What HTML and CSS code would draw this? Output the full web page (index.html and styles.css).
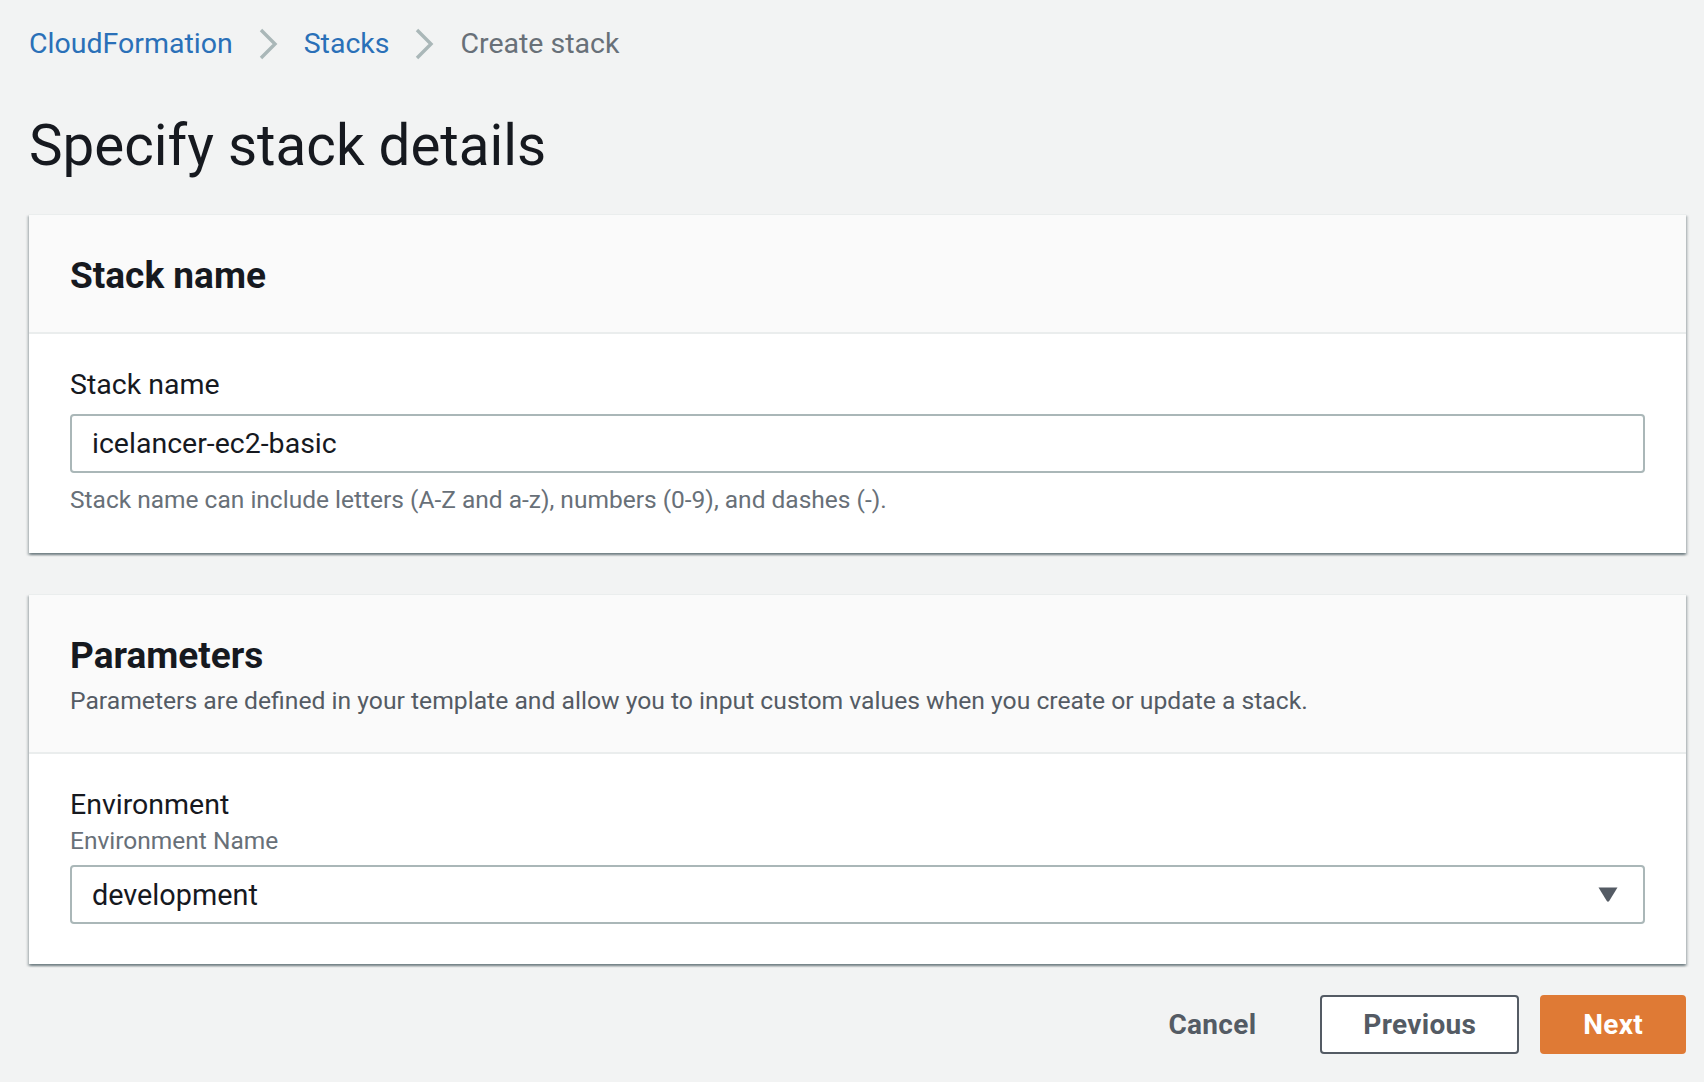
FILE: index.html
```html
<!DOCTYPE html>
<html lang="en">
<head>
<meta charset="utf-8">
<title>Specify stack details</title>
<link rel="stylesheet" href="styles.css">
</head>
<body>
<div class="page">
  <nav class="crumbs">
    <a class="crumb-link" href="#">CloudFormation</a>
    <svg class="chev" width="20" height="32" viewBox="0 0 20 32"><path d="M3 2 L17 16 L3 30" fill="none" stroke="#aab7b8" stroke-width="3.4"/></svg>
    <a class="crumb-link" href="#">Stacks</a>
    <svg class="chev" width="20" height="32" viewBox="0 0 20 32"><path d="M3 2 L17 16 L3 30" fill="none" stroke="#aab7b8" stroke-width="3.4"/></svg>
    <span class="crumb-current">Create stack</span>
  </nav>

  <h1 class="title">Specify stack details</h1>

  <section class="card">
    <header class="card-head">
      <h2 class="card-title">Stack name</h2>
    </header>
    <div class="card-body">
      <label class="field-label" for="sn">Stack name</label>
      <input class="text-input" id="sn" type="text" value="icelancer-ec2-basic">
      <p class="hint">Stack name can include letters (A-Z and a-z), numbers (0-9), and dashes (-).</p>
    </div>
  </section>

  <section class="card card-params">
    <header class="card-head">
      <h2 class="card-title">Parameters</h2>
      <p class="card-desc">Parameters are defined in your template and allow you to input custom values when you create or update a stack.</p>
    </header>
    <div class="card-body">
      <div class="field-label">Environment</div>
      <div class="field-desc">Environment Name</div>
      <div class="select">
        <span class="select-value">development</span>
        <svg class="caret" width="20" height="15" viewBox="0 0 20 15"><path d="M0.5 0.5 H19.5 L11.2 14 Q10 15.5 8.8 14 Z" fill="#545b64"/></svg>
      </div>
    </div>
  </section>

  <div class="actions">
    <button class="btn btn-link" type="button">Cancel</button>
    <button class="btn btn-normal" type="button">Previous</button>
    <button class="btn btn-primary" type="button">Next</button>
  </div>
</div>
</body>
</html>
```

FILE: styles.css
```css
* { box-sizing: border-box; }

html, body {
  margin: 0;
  padding: 0;
  background: #f2f3f3;
}

body {
  font-family: Roboto, "Liberation Sans", Arial, sans-serif;
  color: #16191f;
}

.page {
  padding: 24px 18px 0 29px;
}

.crumbs {
  display: flex;
  align-items: center;
  height: 40px;
  font-size: 28.5px;
  line-height: 40px;
}

.crumb-link {
  color: #2a70b8;
  text-decoration: none;
}

.chev {
  margin: 0 26px 0 25px;
  display: block;
}

.crumb-current {
  color: #687078;
}

.title {
  margin: 46px 0 0 0;
  font-size: 56.5px;
  font-weight: 400;
  line-height: 72px;
}

.card {
  margin-top: 32px;
  background: #ffffff;
  box-shadow: 0 2px 2px 0 rgba(0, 28, 36, 0.35), 2px 2px 2px 0 rgba(0, 28, 36, 0.15), -2px 2px 2px 0 rgba(0, 28, 36, 0.15);
  border-top: 1px solid #eaeded;
}

.card-params {
  margin-top: 41px;
}

.card-head {
  background: #fafafa;
  border-bottom: 2px solid #eaeded;
  padding: 39px 41px 34px 41px;
}

.card-params .card-head {
  padding-bottom: 36px;
}

.card-title {
  margin: 0;
  font-size: 37px;
  font-weight: 700;
  line-height: 44px;
}

.card-desc {
  margin: 8px 0 0 0;
  font-size: 24.7px;
  line-height: 30px;
  color: #545b64;
}

.card-body {
  padding: 33px 41px 38px 41px;
}

.card-params .card-body {
  padding-bottom: 40px;
}

.field-label {
  display: block;
  font-size: 28.5px;
  line-height: 36px;
  color: #16191f;
}

.text-input {
  display: block;
  width: 100%;
  height: 59px;
  margin: 11px 0 0 0;
  padding: 0 20px;
  border: 2px solid #aab7b8;
  border-radius: 4px;
  background: #ffffff;
  font-family: Roboto, "Liberation Sans", Arial, sans-serif;
  font-size: 28.5px;
  color: #16191f;
  outline: none;
}

.hint {
  margin: 12px 0 0 0;
  font-size: 24.5px;
  line-height: 30px;
  color: #687078;
}

.field-desc {
  margin-top: 3px;
  font-size: 24.5px;
  line-height: 30px;
  color: #687078;
}

.select {
  display: flex;
  align-items: center;
  justify-content: space-between;
  height: 59px;
  margin-top: 9px;
  padding: 0 25px 0 20px;
  border: 2px solid #aab7b8;
  border-radius: 4px;
  background: #ffffff;
}

.select-value {
  font-size: 28.8px;
  color: #16191f;
}

.caret {
  display: block;
}

.actions {
  display: flex;
  justify-content: flex-end;
  gap: 21px;
  margin-top: 31px;
}

.btn {
  height: 59px;
  padding: 0 41px;
  border-radius: 4px;
  font-family: Roboto, "Liberation Sans", Arial, sans-serif;
  font-size: 28px;
  font-weight: 700;
  letter-spacing: 0.3px;
  cursor: pointer;
}

.btn-link {
  border: 2px solid transparent;
  background: transparent;
  color: #545b64;
}

.btn-normal {
  border: 2px solid #545b64;
  background: #ffffff;
  color: #545b64;
}

.btn-primary {
  border: 2px solid #df7a35;
  background: #df7a35;
  color: #ffffff;
}
```
